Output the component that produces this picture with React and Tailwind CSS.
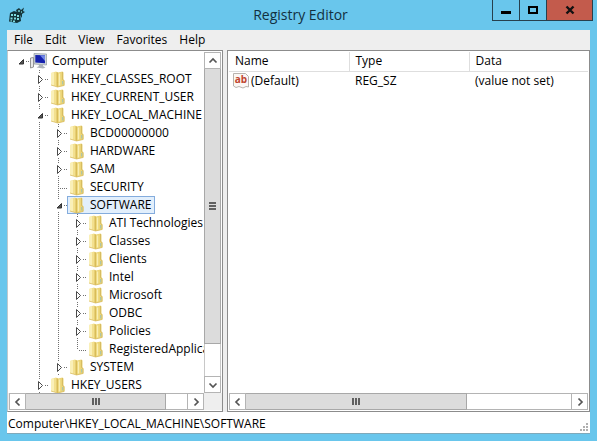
import { useState } from "react";

const MENU = ["File", "Edit", "View", "Favorites", "Help"];

// guides: what each indent column shows, from the outermost one in.
const KEYS = [
  { name: "Computer", guides: ["root"], open: true },
  { name: "HKEY_CLASSES_ROOT", guides: ["none", "closed"] },
  { name: "HKEY_CURRENT_USER", guides: ["none", "closed"] },
  { name: "HKEY_LOCAL_MACHINE", guides: ["none", "open"], open: true },
  { name: "BCD00000000", guides: ["none", "line", "closed"] },
  { name: "HARDWARE", guides: ["none", "line", "closed"] },
  { name: "SAM", guides: ["none", "line", "closed"] },
  { name: "SECURITY", guides: ["none", "line", "leaf"] },
  { name: "SOFTWARE", guides: ["none", "line", "open"], open: true },
  { name: "ATI Technologies", guides: ["none", "line", "line", "closed"] },
  { name: "Classes", guides: ["none", "line", "line", "closed"] },
  { name: "Clients", guides: ["none", "line", "line", "closed"] },
  { name: "Intel", guides: ["none", "line", "line", "closed"] },
  { name: "Microsoft", guides: ["none", "line", "line", "closed"] },
  { name: "ODBC", guides: ["none", "line", "line", "closed"] },
  { name: "Policies", guides: ["none", "line", "line", "closed"] },
  { name: "RegisteredApplications", guides: ["none", "line", "line", "last"] },
  { name: "SYSTEM", guides: ["none", "line", "closed"] },
  { name: "HKEY_USERS", guides: ["none", "closed"] },
];

function Guide({ kind }) {
  const dots = { stroke: "#707070", strokeDasharray: "1 1", fill: "none" };
  return (
    <svg className="h-[18px] w-[19px] shrink-0" viewBox="0 0 19 18" aria-hidden="true">
      {(kind === "line" || kind === "leaf") && <path d="M10.5 0V18" {...dots} />}
      {kind === "last" && <path d="M10.5 0V10" {...dots} />}
      {(kind === "leaf" || kind === "last") && <path d="M12 10.5H19" {...dots} />}
      {(kind === "closed" || kind === "open") && <path d="M10.5 0V4M10.5 16V18" {...dots} />}
      {(kind === "closed" || kind === "open" || kind === "root") && <path d="M16 9.5H19" {...dots} />}
      {kind === "closed" && <path d="M9.5 5.5L13.5 9.5L9.5 13.5Z" fill="#fff" stroke="#4a4a4a" />}
      {(kind === "open" || kind === "root") && <path d="M13.5 7.5V12H9Z" fill="#555" stroke="#333" />}
    </svg>
  );
}

function FolderIcon() {
  return (
    <svg className="h-[18px] w-[18px] shrink-0" viewBox="0 0 18 18" aria-hidden="true">
      <path d="M1 3L6 1.5L8 2.5V17L6 16.5L1 15Z" fill="#f3e08f" />
      <path d="M1 3L4 2.2V15.8L1 15Z" fill="#faf0b8" />
      <path d="M6.5 2L8 2.5V17L6.5 16.5Z" fill="#d9bc58" />
      <path d="M8 2.5L12.5 1.5L13.5 2.5V9.5L14.5 10.5V15.5L8 17Z" fill="#ecd577" />
      <path d="M9.5 3.5V15.5" stroke="#f9eeb4" strokeWidth="1.4" />
      <path d="M12.5 2V9.5L14 10.5V15.5" stroke="#cfb257" strokeWidth=".7" fill="none" />
      <path d="M12.7 11V14.5" stroke="#9fc3b4" />
      <path d="M1 15L7.5 17L14 15.5" stroke="#d5b85a" strokeWidth=".7" fill="none" />
    </svg>
  );
}

function ComputerIcon() {
  return (
    <svg className="h-[18px] w-[18px] shrink-0 overflow-visible" viewBox="0 0 18 18" aria-hidden="true">
      <path d="M-.5 6L2.5 5.5V15L-.5 16Z" fill="#e8e8e8" stroke="#8a8a8a" strokeWidth=".9" />
      <path d="M3 1.5L15.5 2V13L3 12Z" fill="#cfd6dc" stroke="#8f989f" strokeWidth=".7" />
      <path d="M4.3 3L14 3.3V11.3L4.3 10.6Z" fill="#1622ae" />
      <path d="M9 3.2L14 3.3V9Z" fill="#6f86e6" />
      <path d="M7.5 12.5H12V14L14.5 15.5L12 16.5L5.5 15.5L8 14Z" fill="#aeb4ba" />
    </svg>
  );
}

function RegistryIcon() {
  return (
    <svg className="h-[18px] w-[18px]" viewBox="0 0 18 18" aria-hidden="true">
      <path d="M2 7L6 5L12 7L13 15L9 17L1 15.5Z" fill="#12343a" />
      <path d="M3 8H5V10H3ZM6 8H8V10H6ZM9 9H11V11H9ZM2.5 11.5H4.5V13.5H2.5ZM6 11.5H8V13.5H6ZM9 12H11V14H9ZM5 14.5H7V16H5ZM2.5 14.3H4V15.5H2.5Z" fill="#7fdcdf" />
      <path d="M8 4L11 2L13 4L16 1.5L15 5L17 6L14 8V12L12 9L9 7Z" fill="#17373b" />
      <path d="M10 4H12V6H10ZM13 5H14V7H13Z" fill="#5aa5aa" />
    </svg>
  );
}

function StringIcon() {
  return (
    <svg className="h-[17px] w-[17px] shrink-0" viewBox="0 0 17 17" aria-hidden="true">
      <path d="M.5 1.5H12.5L15.5 4.5V15L13 14.5L10 16L6 14.5L3 15.5L.5 14Z" fill="#fbf7f4" stroke="#b9b3ae" />
      <text x="8" y="11" textAnchor="middle" fontSize="10" fontWeight="700" fill="#c0452f" fontFamily="Open Sans, sans-serif">ab</text>
    </svg>
  );
}

const ARROWS = {
  up: "M4.5 9.5L8 6L11.5 9.5",
  down: "M4.5 6.5L8 10L11.5 6.5",
  left: "M9.5 4.5L6 8L9.5 11.5",
  right: "M6.5 4.5L10 8L6.5 11.5",
};

function ScrollButton({ dir }) {
  return (
    <button aria-label={"Scroll " + dir} className="flex size-[17px] shrink-0 items-center justify-center border border-[#b4b4b4] bg-white">
      <svg className="size-4 shrink-0" viewBox="0 0 16 16" aria-hidden="true">
        <path d={ARROWS[dir]} fill="none" stroke="#555" strokeWidth="1.7" />
      </svg>
    </button>
  );
}

function HorizontalScroll({ className, thumb, track }) {
  return (
    <div className={"flex h-[17px] shrink-0 " + className}>
      <ScrollButton dir="left" />
      <div className={"flex items-center justify-center gap-px border-y border-r border-[#a8a8a8] bg-[#dcdcdc] " + thumb}>
        <span className="h-[7px] w-0.5 bg-[#606060]" />
        <span className="h-[7px] w-0.5 bg-[#606060]" />
        <span className="h-[7px] w-0.5 bg-[#606060]" />
      </div>
      <div className={"border-y border-[#b4b4b4] bg-white " + track} />
      <ScrollButton dir="right" />
    </div>
  );
}

function VerticalScroll() {
  return (
    <div className="flex w-[17px] shrink-0 flex-col">
      <ScrollButton dir="up" />
      <div className="flex flex-[275] flex-col items-center justify-center gap-px border-x border-b border-[#a8a8a8] bg-[#dcdcdc]">
        <span className="h-0.5 w-[7px] bg-[#606060]" />
        <span className="h-0.5 w-[7px] bg-[#606060]" />
        <span className="h-0.5 w-[7px] bg-[#606060]" />
      </div>
      <div className="flex-[32] border-x border-[#c8c8c8] bg-white" />
      <ScrollButton dir="down" />
    </div>
  );
}

function TitleBar() {
  return (
    <header className="grid h-[30px] grid-cols-[1fr_auto_1fr] pl-2 pr-1">
      <div className="pt-1.5">
        <RegistryIcon />
      </div>
      <h1 className="pt-[5px] text-[14px] leading-5 text-[#12303f]">Registry Editor</h1>
      <div className="flex h-[21px] justify-self-end border-x border-b border-[#27404d]">
        <button aria-label="Minimize" className="flex w-[27px] items-center justify-center border-r border-[#27404d]">
          <svg className="h-3 w-3" viewBox="0 0 12 12" aria-hidden="true">
            <path d="M1 8.5H11" stroke="#000" strokeWidth="3" />
          </svg>
        </button>
        <button aria-label="Maximize" className="flex w-[27px] items-center justify-center border-r border-[#27404d]">
          <svg className="h-3 w-3" viewBox="0 0 12 12" aria-hidden="true">
            <path d="M2 3H10V9H2Z" fill="none" stroke="#000" strokeWidth="2" />
          </svg>
        </button>
        <button aria-label="Close" className="flex w-[45px] items-center justify-center bg-[#c35b4c]">
          <svg className="h-3 w-3" viewBox="0 0 12 12" aria-hidden="true">
            <path d="M2.5 2.5L9.5 9.5M9.5 2.5L2.5 9.5" stroke="#111" strokeWidth="2.4" />
          </svg>
        </button>
      </div>
    </header>
  );
}

export default function App() {
  const [selected, setSelected] = useState("SOFTWARE");
  return (
    <div className="flex h-screen flex-col bg-[#69c6ec] font-['Open_Sans','Noto_Sans',sans-serif] text-[12px] leading-[18px] text-black">
      <TitleBar />
      <div className="mx-[7px] mb-[7px] flex min-h-0 flex-1 flex-col bg-[#eeeeee]">
        <nav className="flex h-5 items-center gap-3 pl-[7px]">
          {MENU.map((item) => (
            <button key={item}>{item}</button>
          ))}
        </nav>

        <main className="flex min-h-0 flex-1 gap-1">
          <section className="flex w-[216px] shrink-0 flex-col border border-[#8c8c8c] border-l-[#c0c8cc] bg-white pt-px">
            <div className="flex min-h-0 flex-1">
              <ul role="tree" aria-label="Registry keys" className="min-w-0 flex-1 overflow-hidden pl-0.5">
                {KEYS.map(({ name, guides, open }) => (
                  <li key={name} role="treeitem" aria-expanded={open} aria-selected={name === selected} className="flex h-[18px]">
                    {guides.map((kind, i) => (
                      <Guide key={i} kind={kind} />
                    ))}
                    <button
                      onClick={() => setSelected(name)}
                      className={
                        "flex shrink-0 items-center gap-[3px] border pl-px pr-[3px] whitespace-nowrap " +
                        (name === selected ? "border-[#84acdd] bg-[#e2effc]" : "border-transparent")
                      }
                    >
                      {name === "Computer" ? <ComputerIcon /> : <FolderIcon />}
                      {name}
                    </button>
                  </li>
                ))}
              </ul>
              <VerticalScroll />
              <div className="w-px" />
            </div>
            <div className="flex bg-[#eeeeee]">
              <HorizontalScroll className="ml-px w-[195px]" thumb="flex-[140]" track="flex-[21]" />
            </div>
            <div className="h-px" />
          </section>

          <section className="flex min-w-0 flex-1 flex-col border border-[#8c8c8c] bg-white p-px">
            <div className="min-h-0 flex-1 overflow-hidden">
              <table className="w-full table-fixed border-collapse text-left">
                <thead>
                  <tr className="h-[19px] border-b border-[#dedede]">
                    <th className="w-[120px] border-r border-[#dedede] pl-1.5 font-normal">Name</th>
                    <th className="w-[120px] border-r border-[#dedede] pl-1.5 font-normal">Type</th>
                    <th className="pl-1.5 font-normal">Data</th>
                  </tr>
                </thead>
                <tbody>
                  <tr className="h-[18px]">
                    <td className="pl-1">
                      <span className="flex items-center gap-px">
                        <StringIcon />
                        (Default)
                      </span>
                    </td>
                    <td className="pl-1.5">REG_SZ</td>
                    <td className="pl-1.5">(value not set)</td>
                  </tr>
                </tbody>
              </table>
            </div>
            <HorizontalScroll className="" thumb="flex-[222]" track="flex-[105]" />
          </section>
        </main>

        <footer className="flex h-[22px] items-end justify-between border-b border-[#7fa9ba] bg-white pl-px">
          <span>Computer\{selected === "Computer" ? "" : "HKEY_LOCAL_MACHINE\\" + selected}</span>
          <svg className="size-3" viewBox="0 0 12 12" fill="#b0b0b0" aria-hidden="true">
            <path d="M8 2h2v2h-2zM8 5h2v2h-2zM8 8h2v2h-2zM5 5h2v2h-2zM5 8h2v2h-2zM2 8h2v2h-2z" />
          </svg>
        </footer>
      </div>
    </div>
  );
}
